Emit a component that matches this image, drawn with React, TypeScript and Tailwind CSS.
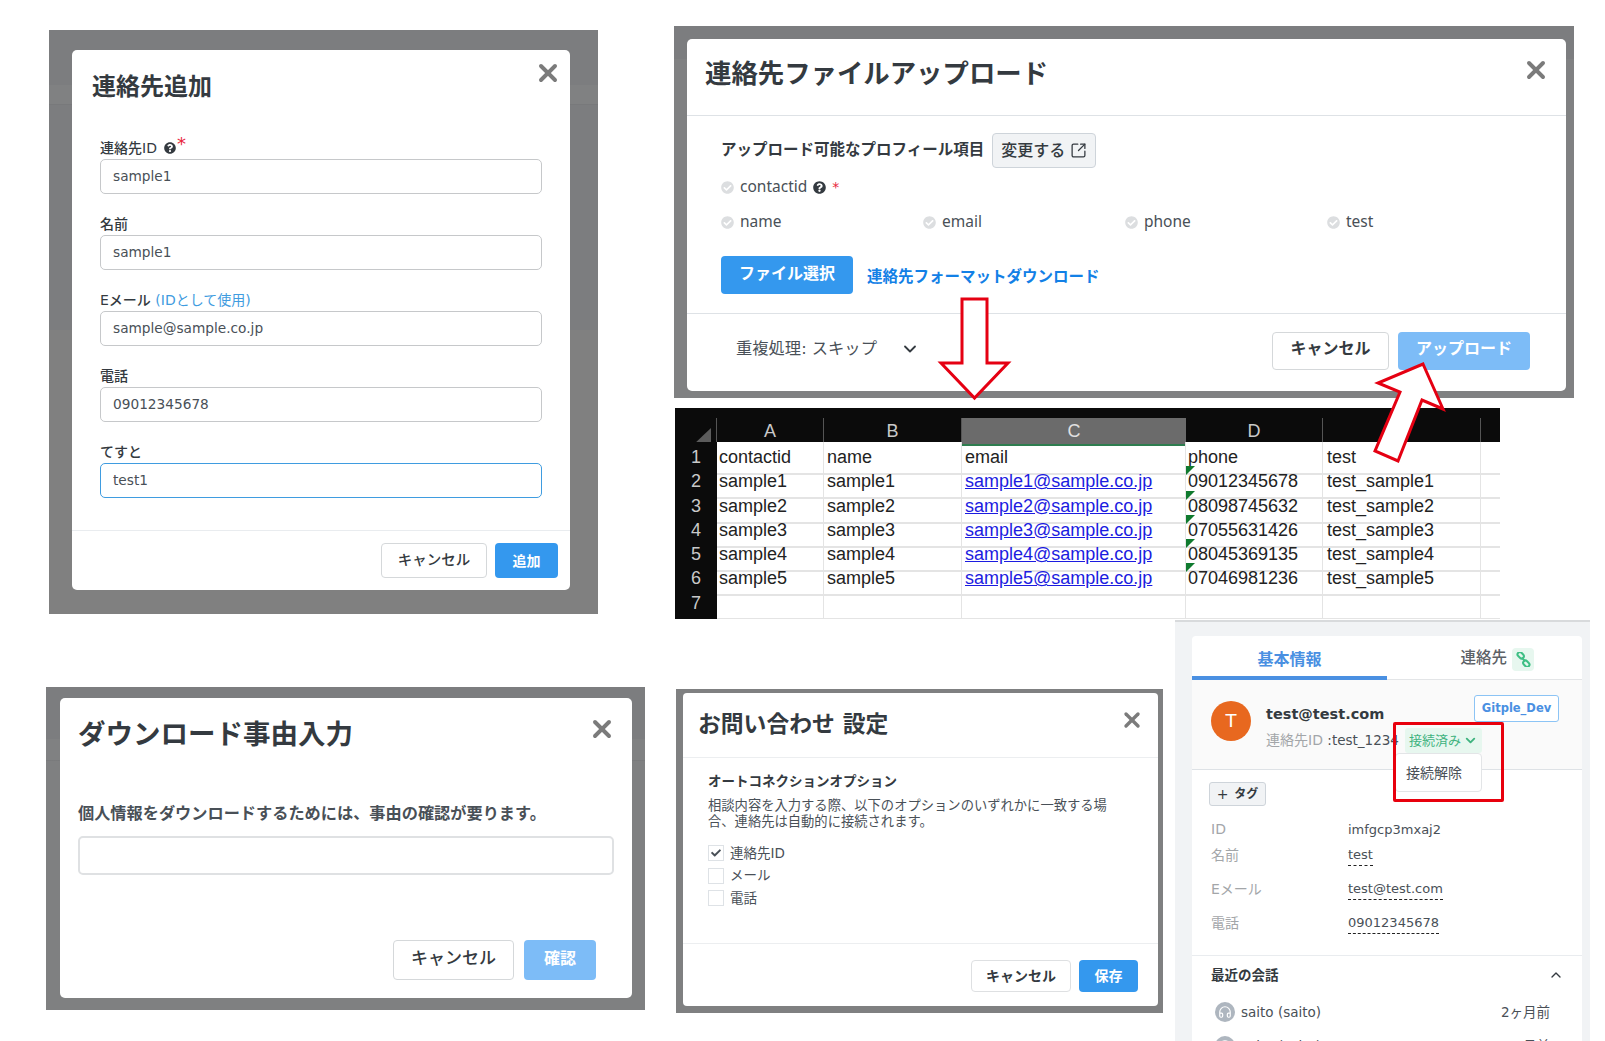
import { ChevronDown, ChevronUp, Headphones, SquareArrowOutUpRight, X } from "lucide-react"
import { FaCheck, FaCheckCircle, FaQuestionCircle } from "react-icons/fa"

function Close({ className = "" }: { className?: string }) {
  return <X size={28} strokeWidth={3.4} className={`shrink-0 text-[#7b7b7b] ${className}`} />
}

function TextField({ label, value, focused }: { label: React.ReactNode; value: string; focused?: boolean }) {
  return (
    <div className="mb-5">
      <div className="mb-px h-5 text-sm leading-5 font-medium text-[#343a40]">{label}</div>
      <input
        readOnly
        value={value}
        className={`block h-[35px] w-[442px] rounded-[5px] border bg-white px-3 pb-px text-[13.7px] text-[#495057] outline-none ${focused ? "border-[#3f9ce0]" : "border-[#c6c8ca]"}`}
      />
    </div>
  )
}

function Dot({ label, className = "" }: { label: string; className?: string }) {
  return (
    <span className={`flex items-center gap-[6px] font-['Noto_Sans','Noto_Sans_CJK_JP',sans-serif] text-[15.5px] text-[#495057] ${className}`}>
      <FaCheckCircle size={13} className="text-[#dcdee0]" />
      {label}
    </span>
  )
}

function ContactForm() {
  return (
    <section className="mt-[30px] ml-[49px] h-[584px] w-[549px] bg-[linear-gradient(to_bottom,#7c7d7f_55px,#808182_55px,#808182_74px,#747577_74px,#7c7d7f_75px,#7c7d7f_300px,#808080_300px)] pt-[20px] pl-[23px]">
      <div className="h-[540px] w-[498px] rounded-[5px] bg-white">
        <div className="flex h-[88px] justify-between pt-[9px] pr-2 pl-5">
          <h2 className="mt-[10px] text-2xl leading-9 font-bold text-[#343a40]">連絡先追加</h2>
          <Close />
        </div>
        <div className="pl-7">
          <TextField
            value="sample1"
            label={
              <span className="flex items-center gap-[7px]">
                連絡先ID
                <FaQuestionCircle size={12} className="text-[#343a40]" />
                <span className="-mt-2 -ml-[6px] text-lg leading-none text-[#e8263c]">*</span>
              </span>
            }
          />
          <TextField label="名前" value="sample1" />
          <TextField
            value="sample@sample.co.jp"
            label={
              <>
                Eメール <span className="font-normal text-[#3f9ce0]">(IDとして使用)</span>
              </>
            }
          />
          <TextField label="電話" value="09012345678" />
          <TextField label="てすと" value="test1" focused />
        </div>
        <div className="mt-[32px] flex justify-end gap-2 border-t border-[#e9ecef] pt-3 pr-3">
          <button className="h-[35px] w-[106px] rounded-[4px] border border-[#d5d8da] bg-white text-[14.5px] font-medium text-[#343a40]">キャンセル</button>
          <button className="h-[35px] w-[63px] rounded-[4px] bg-[#3498ee] text-sm font-bold text-white">追加</button>
        </div>
      </div>
    </section>
  )
}

function DownloadReason() {
  return (
    <section className="mt-[73px] ml-[46px] h-[323px] w-[599px] bg-[linear-gradient(to_bottom,#7c7d7f_52px,#808182_52px,#808182_73px,#747577_73px,#7f8081_74px)] pt-[11px] pl-[14px]">
      <div className="h-[300px] w-[572px] rounded-[5px] bg-white">
        <div className="flex h-[104px] justify-between pt-[17px] pr-4 pl-[18px]">
          <h2 className="mt-[1px] text-[27.5px] leading-9 font-bold text-[#343a40]">ダウンロード事由入力</h2>
          <Close />
        </div>
        <div className="px-[18px]">
          <p className="text-[16.2px] leading-6 font-bold text-[#495057]">個人情報をダウンロードするためには、事由の確認が要ります。</p>
          <div className="mt-[10px] h-[39px] w-[536px] rounded-[5px] border-2 border-[#dfe1e3]" />
          <div className="mt-[65px] flex justify-end gap-[10px] pr-[18px]">
            <button className="h-10 w-[121px] rounded-[4px] border border-[#d5d8da] pb-[3px] text-[17px] font-medium text-[#343a40]">キャンセル</button>
            <button className="h-10 w-[72px] rounded-[4px] bg-[#7dbcf7] pb-[3px] text-base font-bold text-white">確認</button>
          </div>
        </div>
      </div>
    </section>
  )
}

function FileUpload() {
  return (
    <section className="mt-[26px] ml-[29px] h-[372px] w-[900px] bg-[linear-gradient(to_bottom,#7c7d7f_33px,#808182_33px)] pt-[13px] pl-[13px]">
      <div className="h-[352px] w-[879px] rounded-[5px] bg-white">
        <div className="flex h-[77px] justify-between border-b border-[#dee2e6] pt-[17px] pr-4 pl-[18px]">
          <h2 className="text-[26.4px] leading-9 font-bold text-[#343a40]">連絡先ファイルアップロード</h2>
          <Close />
        </div>
        <div className="h-[198px] border-b border-[#dee2e6] pt-[17px] pl-[34px]">
          <div className="flex items-center gap-2">
            <span className="text-[15.5px] font-bold text-[#343a40]">アップロード可能なプロフィール項目</span>
            <button className="flex h-[35px] w-[104px] items-center justify-center gap-[5px] rounded-[4px] border border-[#ced4da] bg-[#f1f3f5] text-base font-medium text-[#343a40]">
              変更する
              <SquareArrowOutUpRight size={17} strokeWidth={1.8} />
            </button>
          </div>
          <div className="mt-[7px] flex h-6 items-center gap-[6px]">
            <Dot label="contactid" />
            <FaQuestionCircle size={13} className="text-[#343a40]" />
            <span className="text-sm text-[#e8263c]">*</span>
          </div>
          <div className="mt-[11px] flex h-6 items-center">
            <Dot label="name" className="w-[202px]" />
            <Dot label="email" className="w-[202px]" />
            <Dot label="phone" className="w-[202px]" />
            <Dot label="test" />
          </div>
          <div className="mt-[22px] flex items-center gap-[14px]">
            <button className="h-[38px] w-[132px] rounded-[4px] bg-[#3498ee] pb-[2px] text-base font-bold text-white">ファイル選択</button>
            <a className="mt-[5px] text-[15.5px] font-bold text-[#1280e6]">連絡先フォーマットダウンロード</a>
          </div>
        </div>
        <div className="flex h-[76px] items-center justify-between pr-[36px] pb-[3px] pl-[49px]">
          <span className="flex items-center gap-[23px] pb-[3px] text-[16.3px] text-[#495057]">
            重複処理: スキップ
            <ChevronDown size={20} strokeWidth={2.2} className="text-[#343a40]" />
          </span>
          <div className="flex gap-[9px]">
            <button className="h-[38px] w-[117px] rounded-[4px] border border-[#d5d8da] bg-white pb-[3px] text-base font-bold text-[#343a40]">キャンセル</button>
            <button className="h-[38px] w-[132px] rounded-[4px] bg-[#7dbcf7] pb-[3px] text-base font-bold text-white">アップロード</button>
          </div>
        </div>
      </div>
    </section>
  )
}

const sheetRows = [
  ["1", "contactid", "name", "email", "phone", "test"],
  ["2", "sample1", "sample1", "sample1@sample.co.jp", "09012345678", "test_sample1"],
  ["3", "sample2", "sample2", "sample2@sample.co.jp", "08098745632", "test_sample2"],
  ["4", "sample3", "sample3", "sample3@sample.co.jp", "07055631426", "test_sample3"],
  ["5", "sample4", "sample4", "sample4@sample.co.jp", "08045369135", "test_sample4"],
  ["6", "sample5", "sample5", "sample5@sample.co.jp", "07046981236", "test_sample5"],
  ["7", "", "", "", "", ""],
]

const sheetCols = "grid grid-cols-[42px_107px_138px_224px_137px_158px_19px]"

function Sheet() {
  return (
    <section className="mt-[10px] ml-[30px] h-[211px] w-[825px] overflow-hidden bg-white font-['Liberation_Sans',sans-serif] text-[18px]">
      <div className={`${sheetCols} h-[34px] bg-[#0b0b0b] pt-[10px] text-[#c9c9c9]`}>
        <div className="flex items-end justify-end border-r border-[#555] pr-[5px] pb-[1px]">
          <svg width="18" height="17"><polygon points="18,0 18,17 0,17" fill="#5c5c5c" /></svg>
        </div>
        {["A", "B"].map((c) => (
          <div key={c} className="border-r border-[#555] text-center leading-[26px]">{c}</div>
        ))}
        <div className="border-b-2 border-[#2e7d4f] bg-[#6b6b6b] text-center leading-[26px] text-[#e0e0e0]">C</div>
        <div className="border-r border-[#555] text-center leading-[26px]">D</div>
        <div className="border-r border-[#555]" />
        <div />
      </div>
      {sheetRows.map((row) => (
        <div key={row[0]} className={`${sheetCols} h-[24.3px] leading-[31px] text-[#222]`}>
          <div className="border-b border-[#555] bg-[#0b0b0b] text-center text-[#c9c9c9]">{row[0]}</div>
          <div className="border-r border-b-2 border-[#e4e4e4] pl-[2px]">{row[1]}</div>
          <div className="border-r border-b-2 border-[#e4e4e4] pl-[3px]">{row[2]}</div>
          <div className={`border-r border-b-2 border-[#e4e4e4] pl-[3px] ${row[0] !== "1" ? "text-[#1c1ce0] underline" : ""}`}>{row[3]}</div>
          <div className="relative border-r border-b-2 border-[#e4e4e4] pl-[2px]">
            {row[4] && row[0] !== "1" && (
              <span className="absolute top-0 left-0 h-0 w-0 border-t-[9px] border-r-[9px] border-t-[#0f7a2e] border-r-transparent" />
            )}
            {row[4]}
          </div>
          <div className="border-r border-b-2 border-[#e4e4e4] pl-1">{row[5]}</div>
          <div className="border-b-2 border-[#e4e4e4]" />
        </div>
      ))}
      <div className={`${sheetCols} h-[7px]`}>
        <div className="bg-[#0b0b0b]" />
        {[0, 1, 2, 3, 4].map((i) => (
          <div key={i} className="border-r border-[#e4e4e4]" />
        ))}
      </div>
    </section>
  )
}

function CheckRow({ label, checked }: { label: string; checked?: boolean }) {
  return (
    <label className="flex h-4 items-center gap-[6px] text-[13.5px] text-[#495057]">
      <span className="flex h-4 w-4 items-center justify-center border border-[#dee2e6]">
        {checked && <FaCheck size={10} className="text-[#495057]" />}
      </span>
      {label}
    </label>
  )
}

function InquirySettings() {
  return (
    <section className="mt-[69px] ml-[31px] h-[324px] w-[487px] bg-[#7f8081] pt-1 pl-[7px]">
      <div className="h-[313px] w-[475px] rounded-[4px] bg-white">
        <div className="flex h-[65px] justify-between border-b border-[#eceef0] pt-[15px] pr-[14px] pl-[15px]">
          <h2 className="mt-[1px] text-[22.8px] leading-[30px] font-bold text-[#343a40]">お問い合わせ 設定</h2>
          <X size={24} strokeWidth={3.4} className="text-[#7b7b7b]" />
        </div>
        <div className="h-[186px] border-b border-[#eceef0] pt-[13px] pl-[25px]">
          <h3 className="text-[13.5px] leading-5 font-bold text-[#343a40]">オートコネクションオプション</h3>
          <p className="mt-[7px] w-[405px] text-[13.3px] leading-4 text-[#495057]">
            相談内容を入力する際、以下のオプションのいずれかに一致する場合、連絡先は自動的に接続されます。
          </p>
          <div className="mt-[15px] flex flex-col gap-[6.5px]">
            <CheckRow label="連絡先ID" checked />
            <CheckRow label="メール" />
            <CheckRow label="電話" />
          </div>
        </div>
        <div className="flex justify-end gap-2 pt-4 pr-[20px]">
          <button className="h-8 w-[100px] rounded-[4px] border border-[#dee0e2] text-sm font-bold text-[#343a40]">キャンセル</button>
          <button className="h-8 w-[59px] rounded-[4px] bg-[#3498ee] text-sm font-bold text-white">保存</button>
        </div>
      </div>
    </section>
  )
}

function LinkIcon() {
  return (
    <svg width="15" height="15" viewBox="0 0 15 15" fill="none" stroke="#3fbf85" strokeWidth="2">
      <rect x="1.2" y="1" width="7" height="4.6" rx="2.3" transform="rotate(45 4.7 3.3)" />
      <rect x="6.8" y="9.4" width="7" height="4.6" rx="2.3" transform="rotate(45 10.3 11.7)" />
      <path d="M6 6l3 3" />
    </svg>
  )
}

function InfoRow({ label, value, height, dashed }: { label: string; value: string; height: string; dashed?: boolean }) {
  return (
    <div className={`flex items-center text-[13px] ${height}`}>
      <span className="w-[137px] text-sm text-[#a3a6a9]">{label}</span>
      <span className={`leading-[21px] text-[#495057] ${dashed ? "border-b border-dashed border-[#222]" : ""}`}>{value}</span>
    </div>
  )
}

function ChatRow({ className = "" }: { className?: string }) {
  return (
    <div className={`flex items-center justify-between pr-[32px] pl-[23px] text-[13.5px] text-[#495057] ${className}`}>
      <span className="flex items-center gap-[6px]">
        <span className="flex h-5 w-5 items-center justify-center rounded-full bg-[#aeb6bf]">
          <Headphones size={14} strokeWidth={2} className="text-white" />
        </span>
        saito (saito)
      </span>
      <span>2ヶ月前</span>
    </div>
  )
}

function ContactPanel() {
  return (
    <section className="ml-[12px] h-[421px] w-[415px] overflow-hidden border-t-2 border-[#d8dadc] bg-[#f1f3f5] pt-[14px] pl-[17px]">
      <div className="h-[420px] w-[390px] rounded-t-[4px] bg-white">
        <div className="flex h-[44px] border-b border-[#e3e5e7]">
          <div className="flex h-[44px] w-[195px] items-center justify-center border-b-4 border-[#4a90e2] pt-[7px] text-base font-bold text-[#4a90e2]">基本情報</div>
          <div className="flex flex-1 items-center justify-end gap-[5px] pt-[3px] pr-[48px] text-[15.5px] font-medium text-[#5c6166]">
            連絡先
            <span className="flex h-[23px] w-[22px] items-center justify-center rounded-[4px] bg-[#e7f7ef]"><LinkIcon /></span>
          </div>
        </div>
        <div className="relative flex h-[90px] border-b border-[#dee2e6] bg-[#fafafa] pt-[21px] pl-[19px]">
          <div className="flex gap-[15px]">
            <span className="flex h-10 w-10 items-center justify-center rounded-full bg-[#e8681f] text-lg text-white">T</span>
            <div className="-mt-[2px]">
              <div className="text-[14.5px] leading-[30px] font-bold text-[#343a40]">test@test.com</div>
              <div className="-mt-px flex h-[25px] items-center">
                <span className="w-[134px] shrink-0 text-[13.5px] whitespace-nowrap text-[#495057]">
                  <span className="text-sm text-[#a3a6a9]">連絡先ID </span>:test_1234
                </span>
                <span className="relative ml-[5px] flex h-[25px] w-[77px] shrink-0 items-center justify-center gap-[2px] rounded-[3px] bg-[#e7f7ef] text-[13px] whitespace-nowrap text-[#3fb37f]">
                  接続済み
                  <ChevronDown size={15} strokeWidth={3} />
                  <span className="absolute top-full right-0 z-10 h-[39px] w-[87px] rounded-[4px] border border-[#e3e5e7] bg-white pt-[9px] pl-[10px] text-sm text-[#495057]">接続解除</span>
                </span>
              </div>
            </div>
          </div>
          <span className="absolute top-[15px] right-[23px] flex h-[27px] w-[85px] items-center justify-center rounded-[3px] border border-[#8cc4f5] bg-white text-[11.5px] font-bold text-[#4a90e2]">Gitple_Dev</span>
          <span className="absolute top-[42px] left-[201px] z-20 h-[80px] w-[111px] rounded-[2px] border-[3px] border-[#e8000d]" />
        </div>
        <div className="pt-3">
          <span className="ml-[17px] flex h-6 w-[57px] items-center justify-center gap-[6px] rounded-[3px] border border-[#ced4da] bg-[#f1f3f5] text-xs font-bold text-[#343a40]">
            <span className="text-sm font-normal">+</span> タグ
          </span>
          <div className="mt-[11px] pl-[19px]">
            <InfoRow label="ID" value="imfgcp3mxaj2" height="h-6" />
            <InfoRow label="名前" value="test" height="h-[28px]" dashed />
            <InfoRow label="Eメール" value="test@test.com" height="h-[40px]" dashed />
            <InfoRow label="電話" value="09012345678" height="h-[28px]" dashed />
          </div>
        </div>
        <div className="mt-[18px] border-t border-[#e9ecef]">
          <div className="flex h-[38px] items-center justify-between pr-[18px] pl-[19px] text-[13.5px] font-bold text-[#343a40]">
            最近の会話
            <ChevronUp size={16} strokeWidth={2} />
          </div>
          <ChatRow className="mt-[8px]" />
          <ChatRow className="mt-[14px]" />
        </div>
      </div>
    </section>
  )
}

export default function App() {
  return (
    <div className="relative flex h-[1041px] w-[1605px] overflow-hidden bg-white font-['DejaVu_Sans','Noto_Sans_CJK_JP',sans-serif]">
      <div className="w-[645px] shrink-0">
        <ContactForm />
        <DownloadReason />
      </div>
      <div className="flex-1">
        <FileUpload />
        <Sheet />
        <div className="mt-px flex items-start">
          <InquirySettings />
          <ContactPanel />
        </div>
      </div>
      {/* arrows drawn over the screenshots */}
      <svg className="absolute top-[299px] left-[941px] overflow-visible" width="67" height="99">
        <polygon points="21,0 46,0 46,64 67,64 33.5,99 0,64 21,64" fill="#fff" stroke="#e50012" strokeWidth="3" />
      </svg>
      <svg className="absolute top-[364px] left-[1375px] overflow-visible" width="68" height="97">
        <polygon points="48,0 68,45 47,36 23,97 0,87 25,28 3,19" fill="#fff" stroke="#e50012" strokeWidth="3" />
      </svg>
    </div>
  )
}
